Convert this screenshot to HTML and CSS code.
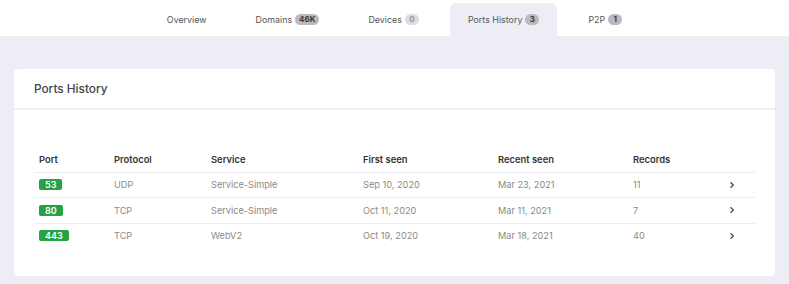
FILE: index.html
```html
<!DOCTYPE html>
<html lang="en">
<head>
  <meta charset="UTF-8">
  <title>Ports History</title>
  <link rel="stylesheet" href="styles.css">
</head>
<body>
  <nav class="tabs">
    <a class="tab">Overview</a>
    <a class="tab">Domains <span class="count">46K</span></a>
    <a class="tab">Devices <span class="count empty">0</span></a>
    <a class="tab active">Ports History <span class="count">3</span></a>
    <a class="tab">P2P <span class="count">1</span></a>
  </nav>

  <main class="page">
    <section class="card">
      <div class="card-header">
        <h2>Ports History</h2>
      </div>
      <div class="card-body">
        <table class="ports">
          <thead>
            <tr>
              <th class="col-port">Port</th>
              <th class="col-proto">Protocol</th>
              <th class="col-service">Service</th>
              <th class="col-first">First seen</th>
              <th class="col-recent">Recent seen</th>
              <th class="col-records">Records</th>
              <th></th>
            </tr>
          </thead>
          <tbody>
            <tr>
              <td><span class="port">53</span></td>
              <td>UDP</td>
              <td>Service-Simple</td>
              <td>Sep 10, 2020</td>
              <td>Mar 23, 2021</td>
              <td>11</td>
              <td class="more"><svg width="6" height="8" viewBox="0 0 6 8"><path d="M1.5 1.2 L4.3 4 L1.5 6.8" fill="none" stroke="#555" stroke-width="1.4"/></svg></td>
            </tr>
            <tr>
              <td><span class="port">80</span></td>
              <td>TCP</td>
              <td>Service-Simple</td>
              <td>Oct 11, 2020</td>
              <td>Mar 11, 2021</td>
              <td>7</td>
              <td class="more"><svg width="6" height="8" viewBox="0 0 6 8"><path d="M1.5 1.2 L4.3 4 L1.5 6.8" fill="none" stroke="#555" stroke-width="1.4"/></svg></td>
            </tr>
            <tr>
              <td><span class="port">443</span></td>
              <td>TCP</td>
              <td>WebV2</td>
              <td>Oct 19, 2020</td>
              <td>Mar 18, 2021</td>
              <td>40</td>
              <td class="more"><svg width="6" height="8" viewBox="0 0 6 8"><path d="M1.5 1.2 L4.3 4 L1.5 6.8" fill="none" stroke="#555" stroke-width="1.4"/></svg></td>
            </tr>
          </tbody>
        </table>
      </div>
    </section>
  </main>
</body>
</html>
```

FILE: styles.css
```css
body {
  margin: 0;
  font-family: 'Inter', 'Noto Sans', sans-serif;
  background: #ededf5;
  color: #444;
}

/* Top tabs */
.tabs {
  display: flex;
  justify-content: center;
  align-items: flex-end;
  gap: 13px;
  height: 36px;
  background: #fff;
}

.tab {
  display: flex;
  align-items: center;
  gap: 3px;
  height: 33px;
  padding: 0 18px;
  font-size: 8.9px;
  color: #555;
  border-radius: 6px 6px 0 0;
  cursor: pointer;
}

.tab.active {
  background: #ededf5;
}

.count {
  display: inline-block;
  padding: 0 4px;
  min-width: 6px;
  line-height: 11px;
  font-size: 8px;
  font-weight: 700;
  text-align: center;
  color: #3a3a3a;
  background: #b9b9bf;
  border-radius: 6px;
}

.count.empty {
  color: #9a9a9a;
  background: #dcdce0;
}

/* Card */
.page {
  padding: 33px 14px 8px;
}

.card {
  background: #fff;
  border-radius: 4px;
  height: 207px;
}

.card-header {
  height: 39px;
  display: flex;
  align-items: center;
  padding: 0 20px;
  border-bottom: 2px solid #f0f0f4;
}

.card-header h2 {
  margin: 0;
  font-size: 11.8px;
  font-weight: 500;
  color: #444;
}

.card-body {
  padding: 37px 20px 0;
}

.ports {
  width: 100%;
  border-collapse: collapse;
  font-size: 9.2px;
}

.ports th,
.ports td {
  height: 24.5px;
  padding: 0 5px;
  text-align: left;
  vertical-align: middle;
}

.ports th {
  font-size: 9.4px;
  font-weight: 600;
  color: #333;
}

.ports thead tr,
.ports tbody tr:not(:last-child) {
  border-bottom: 1px solid #ececf2;
}

.ports td {
  color: #8a8a8a;
}

.col-port { width: 65px; }
.col-proto { width: 87px; }
.col-service { width: 142px; }
.col-first { width: 125px; }
.col-recent { width: 125px; }
.col-records { width: 86px; }

.port {
  display: inline-block;
  padding: 0 6px;
  line-height: 11px;
  font-size: 9px;
  font-weight: 600;
  color: #fff;
  background: #24a244;
  border-radius: 2px;
}

.more svg {
  display: block;
}
```
